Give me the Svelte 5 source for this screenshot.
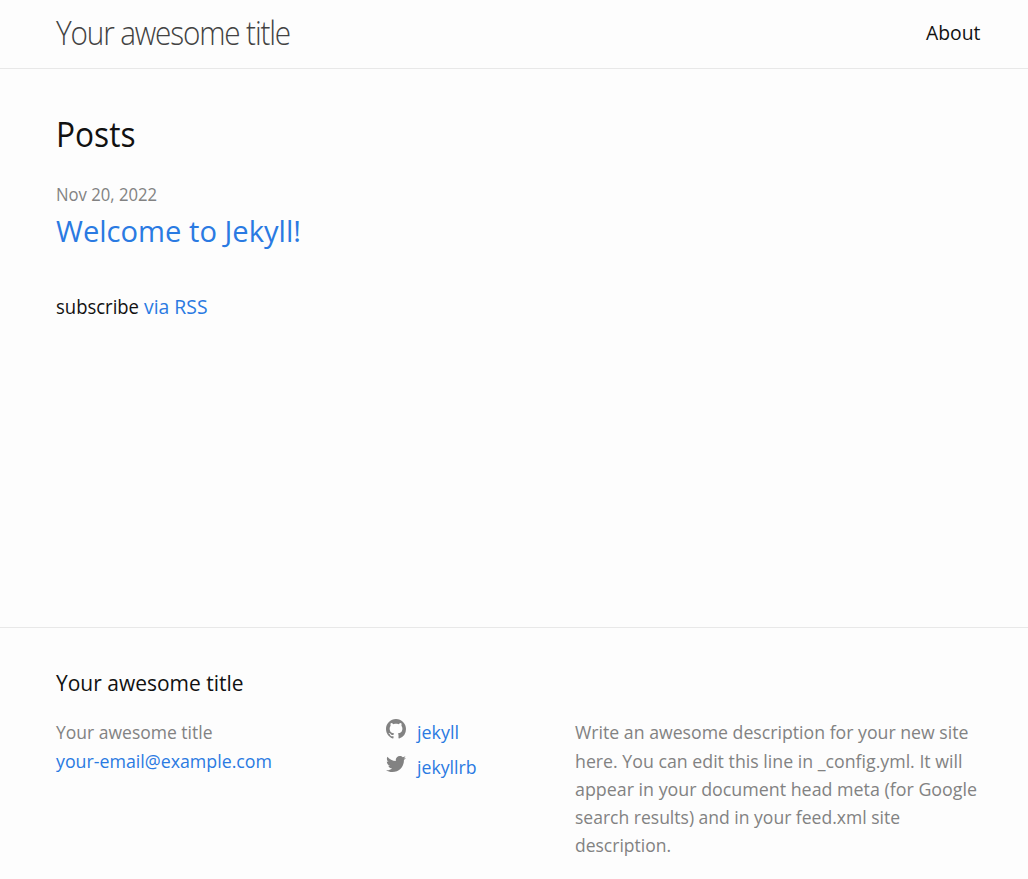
<script>
  const lines = [
    { text: 'Write an awesome description for your new site', width: 393.5 },
    { text: 'here. You can edit this line in _config.yml. It will', width: 387.5 },
    { text: 'appear in your document head meta (for Google', width: 402 },
    { text: 'search results) and in your feed.xml site', width: 325 },
    { text: 'description.', width: 96 }
  ];
</script>

{#snippet fit(text, size, width, weight = 400)}
  <svg class="fit" height={size * 1.4} width={width} style:font-size="{size}px" style:font-weight={weight}>
    <text x="0" y={Math.round(size * 1.1)} textLength={width} lengthAdjust="spacingAndGlyphs">{text}</text>
  </svg>
{/snippet}

<div class="page">
  <header>
    <a class="title" href="#top">{@render fit('Your awesome title', 32.2, 234, 300)}</a>
    <a class="about" href="#about">{@render fit('About', 19.6, 54.5)}</a>
  </header>
  <main>
    <h1>{@render fit('Posts', 34.4, 79.5)}</h1>
    <div class="date">{@render fit('Nov 20, 2022', 17.4, 101)}</div>
    <h3><a href="#post">{@render fit('Welcome to Jekyll!', 29.4, 245)}</a></h3>
    <p class="subscribe">{@render fit('subscribe', 19.6, 83)}<a href="#rss">{@render fit('via RSS', 19.6, 63.5)}</a></p>
  </main>
  <footer>
    <h2>{@render fit('Your awesome title', 22, 187.5)}</h2>
    <div class="columns">
      <div class="contact">
        <span>{@render fit('Your awesome title', 18.4, 156.5)}</span>
        <a href="#email">{@render fit('your-email@example.com', 18.4, 216)}</a>
      </div>
      <div class="social">
        <a href="#github"><svg class="icon" viewBox="0 0 16 16"><path d="M8 0C3.58 0 0 3.58 0 8c0 3.54 2.29 6.53 5.47 7.59.4.07.55-.17.55-.38 0-.19-.01-.82-.01-1.49-2.01.37-2.53-.49-2.69-.94-.09-.23-.48-.94-.82-1.13-.28-.15-.68-.52-.01-.53.63-.01 1.08.58 1.23.82.72 1.21 1.87.87 2.33.66.07-.52.28-.87.51-1.07-1.78-.2-3.64-.89-3.64-3.95 0-.87.31-1.59.82-2.15-.08-.2-.36-1.02.08-2.12 0 0 .67-.21 2.2.82.64-.18 1.32-.27 2-.27.68 0 1.36.09 2 .27 1.53-1.04 2.2-.82 2.2-.82.44 1.1.16 1.92.08 2.12.51.56.82 1.27.82 2.15 0 3.07-1.87 3.75-3.65 3.95.29.25.54.73.54 1.48 0 1.07-.01 1.93-.01 2.2 0 .21.15.46.55.38A8.013 8.013 0 0 0 16 8c0-4.42-3.58-8-8-8z"/></svg>{@render fit('jekyll', 18.4, 42)}</a>
        <a href="#twitter"><svg class="icon" viewBox="0 0 16 16"><path d="M15.969 3.058c-.586.26-1.217.436-1.878.515.675-.405 1.194-1.045 1.438-1.809-.632.375-1.332.647-2.076.793-.596-.636-1.446-1.033-2.387-1.033-1.806 0-3.27 1.464-3.27 3.27 0 .256.029.506.085.745-2.718-.136-5.127-1.438-6.74-3.416-.281.483-.443 1.045-.443 1.644 0 1.134.578 2.135 1.455 2.722-.536-.017-1.04-.164-1.481-.409v.041c0 1.584 1.127 2.906 2.623 3.206-.274.075-.563.115-.861.115-.211 0-.415-.021-.615-.059.416 1.299 1.624 2.245 3.055 2.271-1.119.877-2.529 1.4-4.061 1.4-.264 0-.524-.015-.78-.046 1.447.928 3.166 1.469 5.013 1.469 6.015 0 9.304-4.983 9.304-9.304 0-.142-.003-.283-.009-.423.639-.461 1.194-1.037 1.632-1.692z"/></svg>{@render fit('jekyllrb', 18.4, 59.5)}</a>
      </div>
      <div class="description">
        {#each lines as line}<span>{@render fit(line.text, 18.4, line.width)}</span>{/each}
      </div>
    </div>
  </footer>
</div>

<style>
  :global(body) { background: #fdfdfd; }
  * { box-sizing: border-box; }
  .page { height: 879px; overflow: hidden; display: flex; flex-direction: column; background: #fdfdfd; color: #111; font-family: "Segoe UI", "Open Sans", "Noto Sans", sans-serif; }
  .fit { display: block; overflow: visible; fill: currentColor; flex: none; }
  h1, h2, h3, p { margin: 0; font-weight: 400; }
  a { color: #2a7ae2; text-decoration: none; }
  header { height: 69px; padding: 10px 47.5px 0 56px; border-bottom: 1px solid #e8e8e8; display: flex; justify-content: space-between; flex: none; }
  .title { color: #424242; letter-spacing: -1.25px; }
  .about { color: #111; padding-top: 8px; }
  main { height: 558px; padding: 40px 56px 0; flex: none; }
  h1 { height: 73px; }
  .date { color: #828282; height: 28px; }
  h3 { height: 82px; }
  .subscribe { display: flex; gap: 5px; }
  footer { height: 252px; border-top: 1px solid #e8e8e8; padding: 39px 48px 0 56px; flex: none; }
  h2 { height: 51.45px; }
  .columns { display: grid; grid-template-columns: 330px 189px 1fr; color: #828282; padding-top: 1px; }
  .contact, .description, .social { display: flex; flex-direction: column; }
  .contact > *, .description > * { height: 28.25px; }
  .social a { display: flex; height: 35px; gap: 11px; }
  .icon { width: 20px; height: 20px; fill: #828282; flex: none; }
</style>
